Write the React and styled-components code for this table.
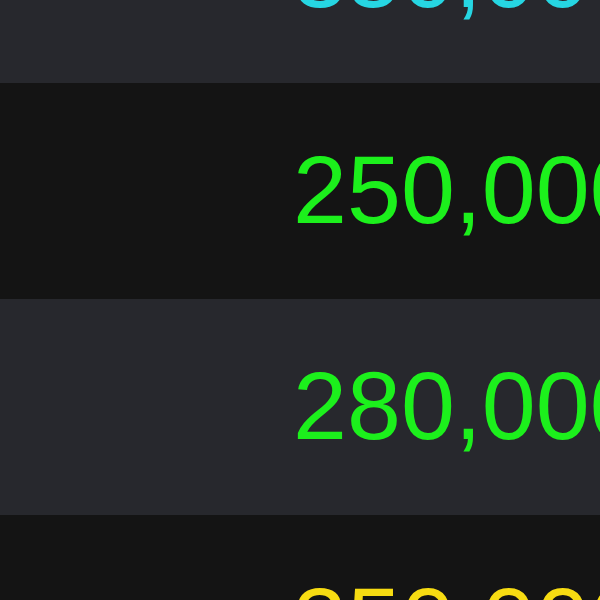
import React from "react";
import styled, { createGlobalStyle } from "styled-components";

const prices = [
  { value: "350,000", color: "#26d6e2" },
  { value: "250,000", color: "#1cf01c" },
  { value: "280,000", color: "#1cf01c" },
  { value: "350,000", color: "#f7dc12" },
];

const App = () => {
  return (
    <>
      <GlobalStyle />
      <List>
        {prices.map((p, i) => (
          <Row key={i} $odd={i % 2 === 1}>
            <Price $color={p.color}>{p.value}</Price>
          </Row>
        ))}
      </List>
    </>
  );
};

export default App;

const GlobalStyle = createGlobalStyle`
  html, body {
    margin: 0;
    padding: 0;
    width: 600px;
    height: 600px;
    overflow: hidden;
    background: #141414;
  }
`;

const List = styled.div`
  display: flex;
  flex-direction: column;
  margin-top: -133px;
  width: 600px;
`;

const Row = styled.div`
  display: flex;
  align-items: center;
  height: 216px;
  padding-left: 293px;
  overflow: hidden;
  background: ${(p) => (p.$odd ? "#141414" : "#27282d")};
`;

const Price = styled.span`
  font-family: "Liberation Sans", Arial, sans-serif;
  font-size: 97px;
  line-height: 1;
  white-space: nowrap;
  color: ${(p) => p.$color};
  margin-top: -4px;
`;
